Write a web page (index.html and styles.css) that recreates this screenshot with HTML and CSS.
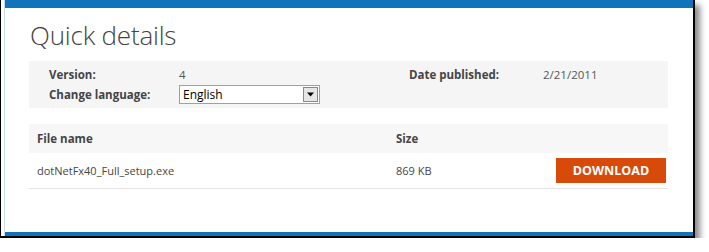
FILE: index.html
```html
<!DOCTYPE html>
<html>
<head>
<meta charset="utf-8">
<link rel="stylesheet" href="styles.css">
</head>
<body>
<div class="frame">
  <div class="inner">
    <div class="bar-top"></div>
    <div class="content">
      <h1 class="title">Quick details</h1>
      <div class="details">
        <div class="col col-left">
          <div class="row"><span class="label">Version:</span><span class="value">4</span></div>
          <div class="row"><span class="label">Change language:</span>
            <span class="select"><span class="select-text">English</span><span class="select-btn"><svg width="9" height="5" viewBox="0 0 9 5"><path d="M1 0.5h7L4.5 4.5z" fill="#000"/></svg></span></span>
          </div>
        </div>
        <div class="col col-right">
          <div class="row"><span class="label label-date">Date published:</span><span class="value">2/21/2011</span></div>
        </div>
      </div>
      <div class="table">
        <div class="thead">
          <span class="c-name">File name</span>
          <span class="c-size">Size</span>
        </div>
        <div class="trow">
          <span class="c-name">dotNetFx40_Full_setup.exe</span>
          <span class="c-size">869 KB</span>
          <span class="download">DOWNLOAD</span>
        </div>
      </div>
    </div>
    <div class="bar-bottom"></div>
  </div>
</div>
</body>
</html>
```

FILE: styles.css
```css
html, body {
  margin: 0;
  padding: 0;
  background: #fff;
}
body {
  font-family: "Open Sans", "Noto Sans", "Liberation Sans", sans-serif;
  color: #454545;
}
.frame {
  width: 692px;
  height: 236px;
  border-left: 1px solid #000;
  border-right: 2px solid #000;
  border-bottom: 2px solid #000;
  box-shadow: 5px 5px 6px rgba(0, 0, 0, 0.45);
  background: #fff;
}
.inner {
  margin-left: 3px;
  height: 236px;
  border-left: 1px solid #c7dcee;
  display: flex;
  flex-direction: column;
}
.bar-top {
  height: 8px;
  background: #1173b9;
}
.bar-bottom {
  height: 4px;
  background: #1173b9;
  margin-top: auto;
}
.content {
  padding-left: 24px;
}
.title {
  margin: 0;
  padding-top: 12px;
  padding-left: 1px;
  height: 53px;
  box-sizing: border-box;
  font-size: 26px;
  line-height: 30px;
  font-weight: 300;
  color: #444;
  letter-spacing: -0.2px;
}
.details {
  width: 639px;
  height: 47px;
  background: #f5f5f5;
  display: flex;
  box-sizing: border-box;
  padding-top: 3px;
  font-size: 11.5px;
}
.col-left {
  padding-left: 20px;
  width: 360px;
}
.row {
  display: flex;
  align-items: center;
  height: 20px;
}
.label {
  font-weight: bold;
  width: 130px;
  color: #444;
}
.label-date {
  width: 134px;
}
.value {
  color: #555;
}
.select {
  display: flex;
  width: 139px;
  height: 17px;
  border: 1px solid #a0a0a0;
  background: #fff;
  box-sizing: content-box;
}
.select-text {
  flex: 1;
  padding-left: 3px;
  line-height: 17px;
  color: #000;
  font-size: 12px;
}
.select-btn {
  width: 15px;
  height: 15px;
  margin: 1px;
  background: #e6e6e6;
  border: 1px solid #8a8a8a;
  box-sizing: border-box;
  display: flex;
  align-items: center;
  justify-content: center;
}
.table {
  width: 639px;
  margin-top: 16px;
  font-size: 11px;
}
.thead {
  height: 29px;
  background: #f7f7f7;
  display: flex;
  align-items: center;
  font-weight: bold;
  font-size: 11.5px;
}
.trow {
  height: 35px;
  display: flex;
  align-items: center;
  border-bottom: 1px solid #e3e3e3;
}
.c-name {
  width: 359px;
  padding-left: 8px;
}
.c-size {
  width: 160px;
}
.download {
  margin-left: auto;
  margin-right: 2px;
  width: 110px;
  height: 25px;
  background: #d84a0a;
  color: #fff;
  font-weight: bold;
  font-size: 12.5px;
  display: flex;
  align-items: center;
  justify-content: center;
}
```
